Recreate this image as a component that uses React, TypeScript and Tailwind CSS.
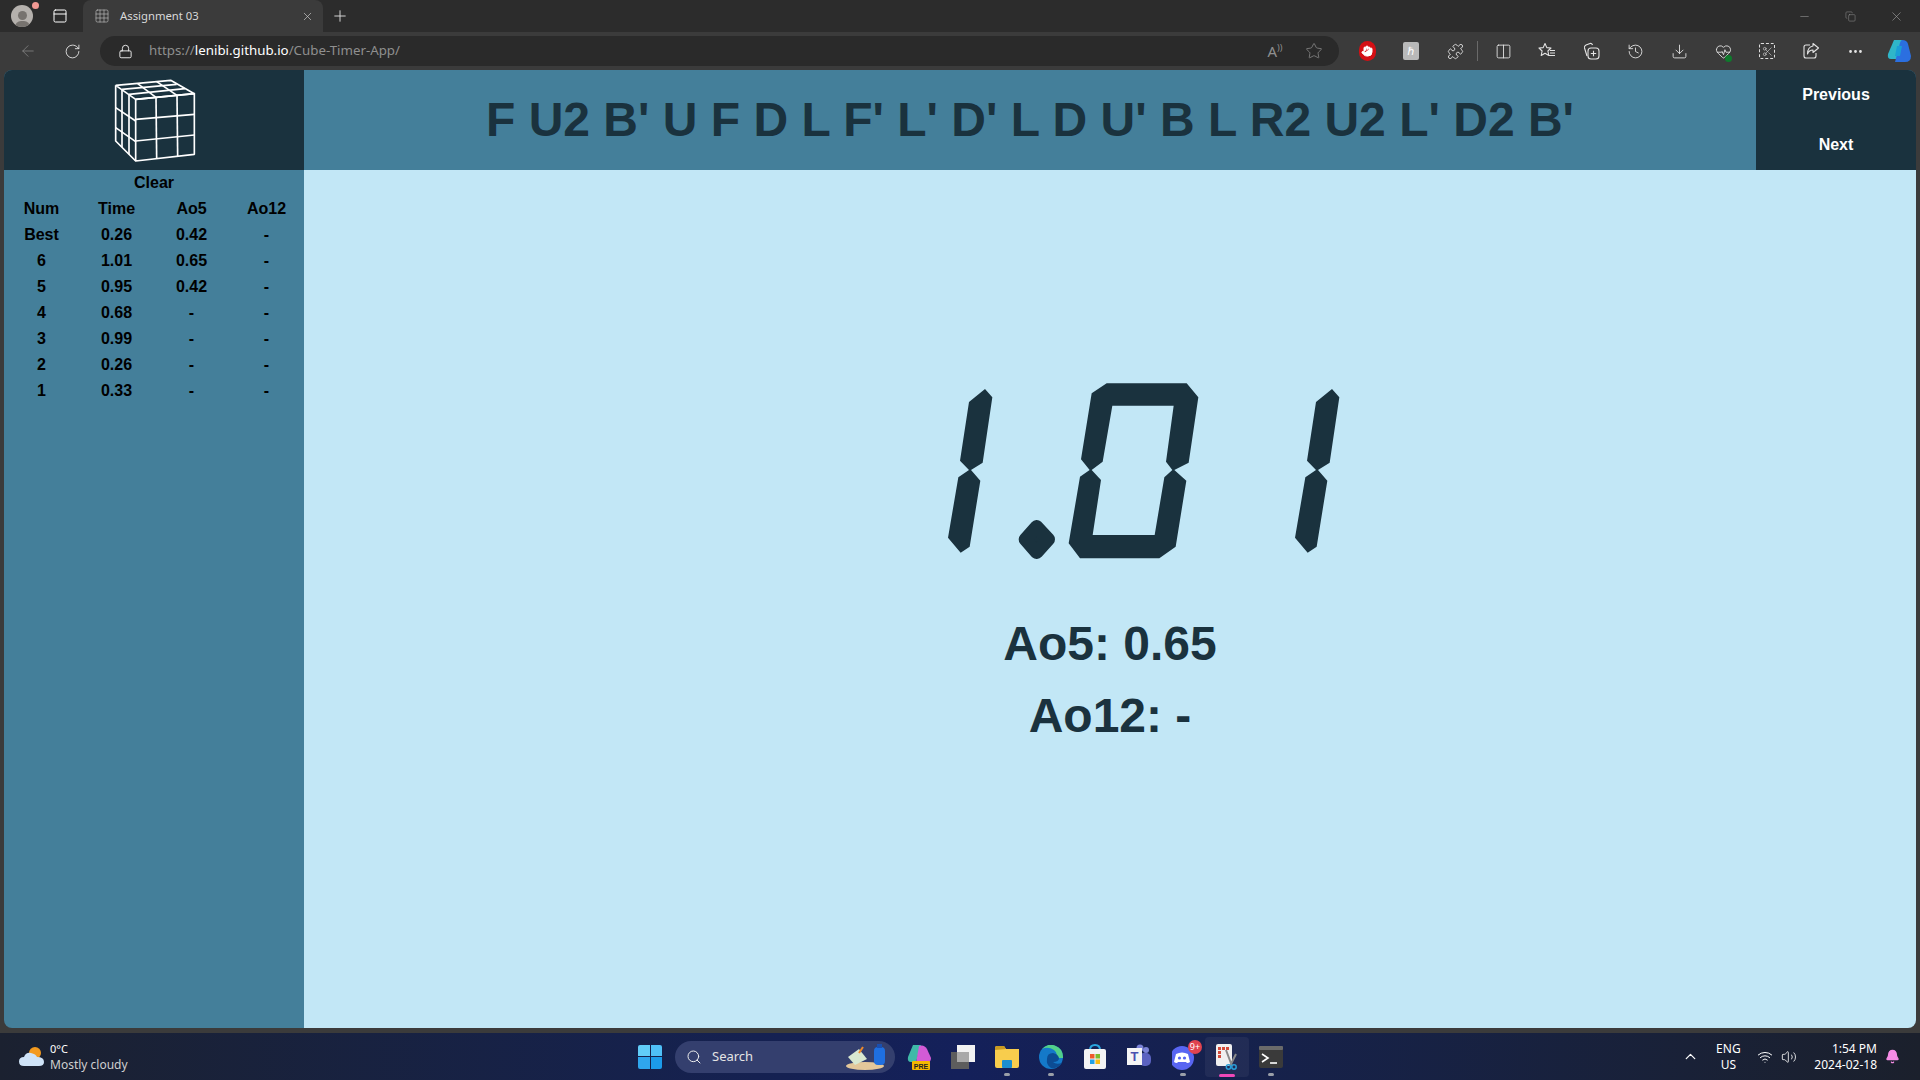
import { ArrowLeft, RotateCw, Lock, X, Plus, Star, Puzzle, Columns2, History, Download, HeartPulse, Scissors, Ellipsis, Copy, Minus, Grid3x3, PanelTop, Search, ChevronUp, Wifi, Volume2, Bell, Hand } from "lucide-react";

const ui = "[font-family:'Noto_Sans','Open_Sans',sans-serif]";
const rows = [
  ["Num", "Time", "Ao5", "Ao12"],
  ["Best", "0.26", "0.42", "-"],
  ["6", "1.01", "0.65", "-"],
  ["5", "0.95", "0.42", "-"],
  ["4", "0.68", "-", "-"],
  ["3", "0.99", "-", "-"],
  ["2", "0.26", "-", "-"],
  ["1", "0.33", "-", "-"],
];

function Cube() {
  const lines = [
    "47,43 212,28 283,68 107,85 47,43",
    "107,85 283,68 283,250 107,270 107,85",
    "168,79 170,262", "231,73 233,255", "107,145 283,130", "107,210 283,192",
    "47,43 47,210 107,270", "66,55 66,228", "87,70 87,250", "47,110 107,150", "47,170 107,212",
    "168,79 113,38", "231,73 170,32", "66,55 230,40", "87,70 255,53",
  ];
  return (
    <svg width="110" height="100" viewBox="0 0 330 300" className="ml-[2px] mt-[2px]">
      {lines.map((p) => (
        <polyline key={p} points={p} fill="none" stroke="#fff" strokeWidth="5" strokeLinejoin="round" />
      ))}
    </svg>
  );
}

function Digits() {
  const one = "147,96 195,57 217,82 188,278 153,300 181,332 149,530 122,548 84,503 115,322 147,300 120,272";
  const zero = "M515,70 L560,40 L800,40 L835,82 L806,278 L763,300 L799,332 L767,530 L718,565 L480,565 L446,520 L480,320 L509,300 L483,268 Z M577,107 L548,275 L515,300 L543,330 L518,495 L704,495 L733,322 L757,300 L738,275 L761,107 Z";
  return (
    <svg width="440" height="200" viewBox="0 0 1320 600" className="ml-[60px]" fill="#1a323e">
      <polygon points={one} />
      <path d={zero} fillRule="evenodd" />
      <polygon points="350,470 385,508 350,547 316,508" stroke="#1a323e" strokeWidth="40" strokeLinejoin="round" />
      <polygon points={one} transform="translate(1041 0)" />
    </svg>
  );
}

function TB({ children }: { children: React.ReactNode }) {
  return <div className="w-[44px] h-[30px] flex items-center justify-center text-[#e4e4e4]">{children}</div>;
}

function Task({ children, dot, active }: { children: React.ReactNode; dot?: boolean; active?: boolean }) {
  return (
    <div className={"relative w-[44px] h-[40px] flex items-center justify-center rounded " + (active ? "bg-white/5" : "")}>
      {children}
      {dot && !active && <div className="absolute bottom-[1px] w-[6px] h-[3px] rounded-full bg-[#9a9fa8]" />}
      {active && <div className="absolute bottom-0 w-[16px] h-[3px] rounded-full bg-[#f048b8]" />}
    </div>
  );
}

export default function App() {
  return (
    <div className="w-[1920px] h-[1080px] flex flex-col overflow-hidden bg-[#3b3b3b]">
      {/* tab strip */}
      <div className={"h-[32px] flex items-center bg-[#2c2c2c] text-[#d8d8d8] " + ui}>
        <div className="relative w-[44px] flex justify-center">
          <div className="w-[22px] h-[22px] rounded-full bg-[#b5b1ad] flex flex-col items-center justify-end overflow-hidden">
            <div className="w-[9px] h-[9px] rounded-full bg-[#77736f] mb-[1px]" />
            <div className="w-[15px] h-[6px] rounded-t-full bg-[#77736f]" />
          </div>
          <div className="absolute top-[-3px] right-[5px] w-[7px] h-[7px] rounded-full bg-[#f29a94]" />
        </div>
        <div className="w-[39px] flex justify-start pl-[8px]"><PanelTop size={16} strokeWidth={1.5} color="#fff" /></div>
        <div className="w-[240px] h-[32px] bg-[#3b3b3b] rounded-t-lg flex items-center pl-[11px] pr-[9px]">
          <Grid3x3 size={16} strokeWidth={1} color="#bbb" />
          <span className="ml-[10px] text-[11.3px] flex-1 text-[#d8d8d8]">Assignment 03</span>
          <X size={13} strokeWidth={1.25} color="#ccc" />
        </div>
        <div className="ml-[8px]"><Plus size={18} strokeWidth={1.25} color="#ddd" /></div>
        <div className="ml-auto flex items-center text-[#a0a0a0]">
          <div className="w-[46px] flex justify-center"><Minus size={13} strokeWidth={1} /></div>
          <div className="w-[46px] flex justify-center"><Copy size={11} strokeWidth={1} /></div>
          <div className="w-[46px] flex justify-center"><X size={15} strokeWidth={1} /></div>
          <div className="w-[1px]" />
        </div>
      </div>
      {/* toolbar */}
      <div className={"h-[38px] flex items-center bg-[#3b3b3b] " + ui}>
        <div className="w-[100px] flex items-center shrink-0">
          <div className="w-[56px] flex justify-center"><ArrowLeft size={18} strokeWidth={1} color="#8a8a8a" /></div>
          <div className="w-[32px] flex justify-center"><RotateCw size={17} strokeWidth={1.25} color="#e6e6e6" /></div>
        </div>
        <div className="w-[1239px] h-[30px] rounded-full bg-[#2a2a2a] flex items-center pl-[18px] shrink-0">
          <Lock size={15} strokeWidth={1.5} color="#eee" />
          <span className="ml-[16px] text-[13.3px] text-[#8f8f8f]">https://<span className="text-white">lenibi.github.io</span>/Cube-Timer-App/</span>
          <div className="ml-auto flex items-center pr-[3px]">
            <span className="w-[44px] mr-[-5px] text-center text-[15px] text-[#8f8f8f]">A<span className="text-[9px] align-super">))</span></span>
            <div className="w-[44px] flex justify-center"><Star size={18} strokeWidth={1} color="#8f8f8f" /></div>
          </div>
        </div>
        <div className="ml-[6px] flex items-center">
          <TB>
            <div className="w-[17px] h-[20px] rounded-full bg-[#d40f14] flex items-center justify-center"><Hand size={12} color="#fff" fill="#fff" /></div>
          </TB>
          <TB><div className="w-[16px] h-[18px] bg-[#b9b9b9] rounded-[2px] text-white text-[11px] flex items-center justify-center">ℏ</div></TB>
          <TB><Puzzle size={17} strokeWidth={1.25} /></TB>
          <div className="w-[1px] h-[20px] bg-[#6a6a6a] mr-[3px]" />
          <TB><Columns2 size={17} strokeWidth={1.25} /></TB>
          <TB>
            <svg width="18" height="18" viewBox="0 0 18 18" fill="none" stroke="currentColor" strokeWidth="1.1" strokeLinejoin="round">
              <path d="M7 1.5 L8.8 5.6 L13 6 L9.9 9 L10.8 13.5 L7 11.2 L3.2 13.5 L4.1 9 L1 6 L5.2 5.6 Z" />
              <path d="M12 8.5 H17 M12 11 H17 M11 13.5 H17" />
            </svg>
          </TB>
          <TB>
            <svg width="18" height="18" viewBox="0 0 18 18" fill="none" stroke="currentColor" strokeWidth="1.1">
              <path d="M5 14 L2.5 6 Q2 4 4 3 L8 1.5 Q10 1 10.5 3" />
              <rect x="6" y="6" width="11" height="11" rx="3" />
              <path d="M11.5 8.8 V14.2 M8.8 11.5 H14.2" />
            </svg>
          </TB>
          <TB><History size={17} strokeWidth={1.25} /></TB>
          <TB><Download size={17} strokeWidth={1.25} /></TB>
          <TB>
            <div className="relative">
              <HeartPulse size={17} strokeWidth={1.25} />
              <div className="absolute right-0 bottom-[-2px] w-[7px] h-[7px] rounded-full bg-[#0e7a2c]" />
            </div>
          </TB>
          <TB><div className="w-[16px] h-[16px] border border-dashed border-[#ddd] rounded-[2px] flex items-center justify-center"><Scissors size={11} strokeWidth={1.25} /></div></TB>
          <TB>
            <svg width="18" height="18" viewBox="0 0 18 18" fill="none" stroke="currentColor" strokeWidth="1.1" strokeLinejoin="round">
              <path d="M8 3 H4 Q2 3 2 5 V14 Q2 16 4 16 H12 Q14 16 14 14 V11" />
              <path d="M11 1.5 L16.5 6 L11 10.5 V8 Q7 8 5.5 12 Q5.5 5 11 4 Z" />
            </svg>
          </TB>
          <TB><Ellipsis size={17} strokeWidth={2} /></TB>
          <TB>
            <svg width="26" height="26" viewBox="0 0 26 26">
              <path d="M8 2 L16 2 L12 21 L5 21 Q1 21 2 16 Z" fill="#2fb6c9" />
              <path d="M16 2 Q21 2 22 6 L25 18 Q25 24 19 24 L9 24 L13 9 Q14 3 16 2 Z" fill="#2b6fe0" />
              <path d="M11 8 L16 8 L14 18 L9 18 Z" fill="#1a9ed6" />
            </svg>
          </TB>
        </div>
      </div>

      {/* app */}
      <div className="mx-[4px] h-[958px] flex flex-col rounded-lg overflow-hidden shrink-0 [font-family:'Liberation_Sans',Arial,sans-serif] font-bold">
        <div className="h-[100px] flex bg-[#447f9a]">
          <div className="w-[300px] bg-[#1a323e] flex items-center justify-center"><Cube /></div>
          <div className="flex-1 flex items-center justify-center text-[48px] text-[#1a323e] whitespace-nowrap">
            F U2 B' U F D L F' L' D' L D U' B L R2 U2 L' D2 B'
          </div>
          <div className="w-[160px] bg-[#1a323e] flex flex-col text-white text-[16px]">
            <div className="h-[50px] flex items-center justify-center">Previous</div>
            <div className="h-[50px] flex items-center justify-center">Next</div>
          </div>
        </div>
        <div className="flex-1 flex">
          <div className="w-[300px] bg-[#447f9a] text-[16px] text-black">
            <div className="h-[26px] pb-[1px] flex items-center justify-center">Clear</div>
            {rows.map((r) => (
              <div key={r[0]} className="h-[26px] grid grid-cols-4 items-center text-center">
                {r.map((c, i) => <div key={i}>{c}</div>)}
              </div>
            ))}
          </div>
          <div className="flex-1 bg-[#c2e7f6] flex flex-col items-center pt-[200px] text-[#1a323e] text-[48px]">
            <Digits />
            <div className="mt-[38px] h-[72px] leading-[71px]">Ao5: 0.65</div>
            <div className="h-[71px] leading-[71px]">Ao12: -</div>
          </div>
        </div>
      </div>

      {/* taskbar */}
      <div className={"mt-[5px] flex-1 relative flex items-center bg-gradient-to-r from-[#1b2130] via-[#14205a] to-[#1b202c] text-white " + ui}>
        <div className="w-[620px] flex items-center pl-[19px] shrink-0">
          <svg width="26" height="22" viewBox="0 0 26 22">
            <circle cx="16" cy="7" r="6" fill="#f39a1f" />
            <path d="M5 20 Q0 20 0 15.5 Q0 11 5 11 Q7 6 12 7 Q17 8 18 11 Q25 11 25 16 Q25 20 20 20 Z" fill="#cfe3f7" />
          </svg>
          <div className="ml-[5px] flex flex-col text-[12px] leading-[16px]">
            <span className="text-[11px]">0°C</span>
            <span className="text-[#cfcfcf]">Mostly cloudy</span>
          </div>
        </div>
        <div className="w-[18px] shrink-0" />
        <div className="grid grid-cols-2 gap-[1px] w-[24px] h-[24px] shrink-0">
          <div className="bg-[#62cdf8] rounded-tl-[2px]" /><div className="bg-[#4fc0f7] rounded-tr-[2px]" />
          <div className="bg-[#2fa6ee] rounded-bl-[2px]" /><div className="bg-[#1c9bea] rounded-br-[2px]" />
        </div>
        <div className="ml-[13px] w-[220px] h-[32px] rounded-full bg-[#343f6e] flex items-center pl-[11px] pr-[6px] shrink-0">
          <Search size={16} strokeWidth={1.5} color="#eee" />
          <span className="ml-[10px] text-[13px] text-[#e4e4e4]">Search</span>
          <svg className="ml-auto" width="44" height="28" viewBox="0 0 44 28">
            <ellipse cx="20" cy="23" rx="19" ry="4" fill="#e3c79a" />
            <path d="M3 14 L14 6 L22 16 L10 22 Z" fill="#d8e8d0" />
            <path d="M18 4 L14 10" stroke="#ee8a2a" strokeWidth="2" />
            <rect x="29" y="4" width="11" height="18" rx="4" fill="#1f6fe0" />
            <rect x="32" y="1" width="5" height="4" fill="#1a4fb0" />
          </svg>
        </div>
        <div className="ml-[2px] flex items-center shrink-0">
          <Task>
            <svg width="26" height="28" viewBox="0 0 26 28">
              <path d="M7 2 L15 2 L10 19 L5 19 Q1 19 2 14 Z" fill="#3fb9a8" />
              <path d="M13 3 Q18 1 21 6 L25 15 Q25 20 20 20 L10 20 Z" fill="#d25bd6" />
              <rect x="6" y="18" width="18" height="9" rx="1" fill="#f5b800" />
              <text x="15" y="25.5" textAnchor="middle" fontSize="7" fontWeight="700" fill="#222" fontFamily="Liberation Sans">PRE</text>
            </svg>
          </Task>
          <Task>
            <div className="relative w-[24px] h-[24px]">
              <div className="absolute left-0 bottom-0 w-[18px] h-[17px] bg-[#5d5d5d]" />
              <div className="absolute right-0 top-0 w-[18px] h-[17px] bg-[#f2f2f2]" />
              <div className="absolute left-[6px] top-[7px] w-[12px] h-[10px] bg-[#a9a9a9]" />
            </div>
          </Task>
          <Task dot>
            <svg width="24" height="22" viewBox="0 0 24 22">
              <path d="M0 2 Q0 0 2 0 L9 0 L11 3 L24 3 L24 20 Q24 22 22 22 L2 22 Q0 22 0 20 Z" fill="#f8cd4d" />
              <path d="M0 2 Q0 0 2 0 L9 0 L11 3 L0 4 Z" fill="#c99a22" />
              <rect x="7" y="14" width="10" height="8" rx="1" fill="#1a8ecf" />
            </svg>
          </Task>
          <Task dot>
            <svg width="24" height="24" viewBox="0 0 24 24">
              <circle cx="12" cy="12" r="12" fill="#1479c9" />
              <path d="M24 12 A12 12 0 0 0 3 4 Q9 1 15 5 Q20 9 16 13 L24 13 Z" fill="#52d08a" />
              <path d="M8 14 Q8 8 14 8 Q19 9 20 13 Q20 17 14 17 Q17 20 23 18 Q19 24 12 23 Q7 20 8 14 Z" fill="#0c4c94" />
            </svg>
          </Task>
          <Task>
            <svg width="24" height="26" viewBox="0 0 24 26">
              <path d="M7 6 Q7 1 12 1 Q17 1 17 6" fill="none" stroke="#2aa7e0" strokeWidth="2" />
              <rect x="1" y="5" width="22" height="20" rx="2" fill="#f3f3f3" />
              <rect x="7" y="10" width="4.5" height="4.5" fill="#ef5a2a" />
              <rect x="12.5" y="10" width="4.5" height="4.5" fill="#7dbb2a" />
              <rect x="7" y="15.5" width="4.5" height="4.5" fill="#1fa0e8" />
              <rect x="12.5" y="15.5" width="4.5" height="4.5" fill="#f9ba12" />
            </svg>
          </Task>
          <Task>
            <svg width="26" height="26" viewBox="0 0 26 26">
              <circle cx="20" cy="6" r="3" fill="#7b83d6" />
              <rect x="13" y="9" width="12" height="13" rx="5" fill="#5b62c0" />
              <circle cx="14" cy="4" r="3.5" fill="#7b83d6" />
              <rect x="1" y="4" width="15" height="17" fill="#f5f5f5" />
              <text x="8.5" y="17" textAnchor="middle" fontSize="13" fontWeight="700" fill="#4a51b0" fontFamily="Liberation Sans">T</text>
            </svg>
          </Task>
          <Task dot>
            <svg width="24" height="28" viewBox="0 0 24 28" className="ml-[2px]">
              <circle cx="10" cy="15" r="12" fill="#5865f2" />
              <path d="M4 11 Q10 8 16 11 L18 19 Q15 21 14 19 L6 19 Q5 21 2 19 Z" fill="#fff" />
              <circle cx="7.5" cy="15" r="1.6" fill="#5865f2" /><circle cx="12.5" cy="15" r="1.6" fill="#5865f2" />
            </svg>
            <div className="absolute top-[3px] right-[3px] w-[14px] h-[14px] rounded-full bg-[#e0434f] text-[9px] leading-[14px] text-center text-white">9+</div>
          </Task>
          <Task active>
            <svg width="26" height="26" viewBox="0 0 26 26">
              <rect x="2" y="0" width="16" height="22" rx="2" fill="#f0f0f0" />
              <rect x="4" y="3" width="3" height="3" fill="#d44a3a" /><rect x="8" y="3" width="3" height="3" fill="#d44a3a" /><rect x="12" y="3" width="3" height="3" fill="#d44a3a" />
              <rect x="4" y="7" width="3" height="3" fill="#d44a3a" /><rect x="4" y="11" width="3" height="3" fill="#d44a3a" />
              <path d="M12 6 L18 22 M22 10 L16 22" stroke="#8a8a8a" strokeWidth="2" />
              <circle cx="14.5" cy="23" r="2.2" fill="none" stroke="#2a9ed8" strokeWidth="1.5" />
              <circle cx="20" cy="23" r="2.2" fill="none" stroke="#2a9ed8" strokeWidth="1.5" />
            </svg>
          </Task>
          <Task dot>
            <svg width="24" height="22" viewBox="0 0 24 22">
              <rect x="0" y="0" width="24" height="22" rx="2" fill="#3a3a3a" />
              <rect x="0" y="0" width="24" height="4" rx="1" fill="#6a6a6a" />
              <path d="M3 8 L9 12 L3 16" fill="none" stroke="#fff" strokeWidth="1.6" />
              <path d="M11 17 L18 17" stroke="#fff" strokeWidth="1.6" />
            </svg>
          </Task>
        </div>
        <div className="ml-auto flex items-center text-white shrink-0">
          <ChevronUp size={17} strokeWidth={1.75} />
          <div className="w-[54px] ml-[2px] text-center text-[12px] leading-[16px]">ENG<br />US</div>
          <div className="ml-[2px] flex items-center gap-[8px]">
            <Wifi size={16} strokeWidth={1.5} />
            <Volume2 size={16} strokeWidth={1.25} />
          </div>
          <div className="ml-[17px] text-right text-[12px] leading-[16px]">1:54 PM<br />2024-02-18</div>
          <div className="ml-[8px] mr-[21px] w-[14px]"><Bell size={15} color="#f68ce6" fill="#f68ce6" /></div>
        </div>
      </div>
    </div>
  );
}
